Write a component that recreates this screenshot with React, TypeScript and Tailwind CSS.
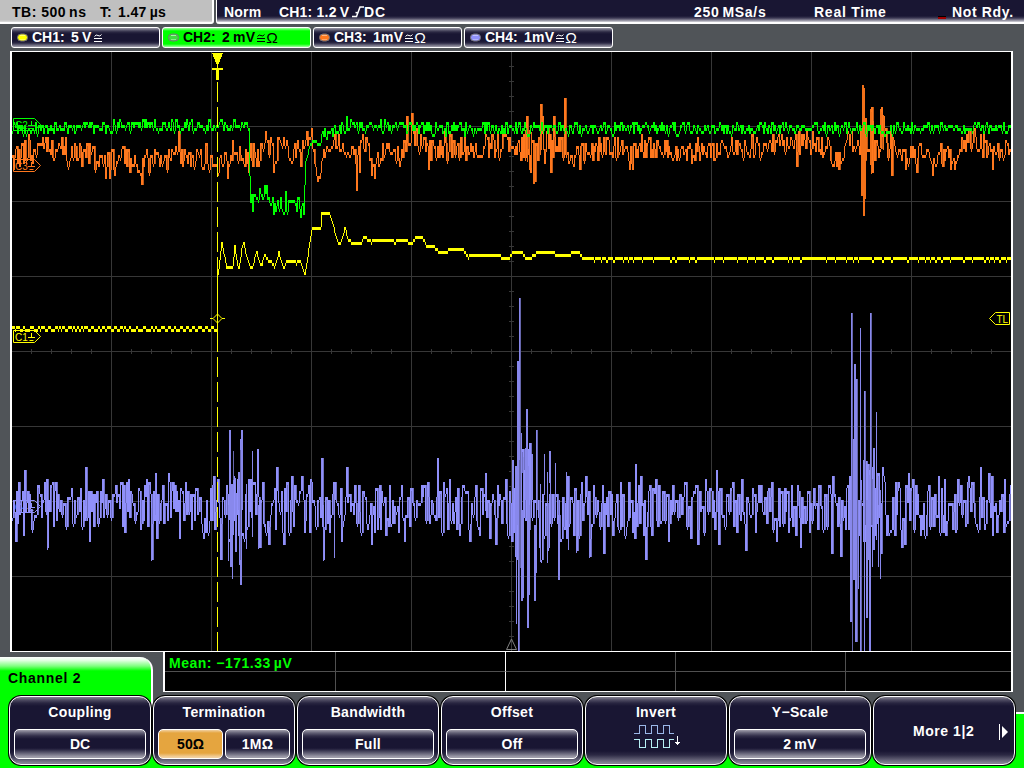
import type { ReactNode } from 'react';

type Point = [number, number];
type Bar = [number, number, number];

const X0 = 12;
const X1 = 1011;
const STEP = 3;

function randomSource(seed: number) {
  let s = seed;
  return () => {
    s = (s + 0x6d2b79f5) | 0;
    let t = Math.imul(s ^ (s >>> 15), 1 | s);
    t = (t + Math.imul(t ^ (t >>> 7), 61 | t)) ^ t;
    return ((t ^ (t >>> 14)) >>> 0) / 4294967296;
  };
}

function interpolate(points: Point[], x: number) {
  if (x <= points[0][0]) return points[0][1];
  for (let i = 1; i < points.length; i++) {
    const [ax, ay] = points[i - 1];
    const [bx, by] = points[i];
    if (x <= bx) return ay + ((by - ay) * (x - ax)) / (bx - ax || 1);
  }
  return points[points.length - 1][1];
}

function columns(values: number[], wideFrom = 1000) {
  let bright = '';
  let dim = '';
  for (let i = 0; i < values.length; i++) {
    const q = Math.round(values[i] / STEP) * STEP;
    const p = i ? Math.round(values[i - 1] / STEP) * STEP : q;
    const top = Math.min(p, q) - 1;
    const h = Math.max(STEP, Math.abs(p - q));
    bright += `M${X0 + i + 0.5} ${top}v${h}`;
    if (h > wideFrom && i % 3 && i < values.length - 1) dim += `M${X0 + i + 1.5} ${top}v${h}`;
  }
  return { bright, dim };
}

function bars(list: Bar[]) {
  return list.map(([x, a, b]) => `M${x + 0.5} ${a}V${b}`).join('');
}

function noisy(base: Point[], amp: Point[], seed: number, hold: number, flip: number, peaks: Point[] = []) {
  const r = randomSource(seed);
  const out: number[] = [];
  let n = 0;
  let sign = 1;
  let left = 0;
  for (let x = X0; x < X1; x++) {
    if (left <= 0) {
      if (r() < flip) sign = -sign;
      n = sign * (0.12 + 0.88 * Math.pow(r(), 1.35));
      left = r() < hold ? 2 : 1;
    }
    left--;
    out.push(interpolate(base, x) + n * interpolate(amp, x));
  }
  peaks.forEach(([x, y]) => {
    out[x - X0] = y;
  });
  return out;
}

const greenBase: Point[] = [
  [12, 129], [80, 129], [150, 126], [247, 127], [248, 130], [249, 178], [250, 202], [256, 199], [262, 197], [266, 196],
  [270, 203], [285, 205], [303, 209], [304, 186], [305, 161], [307, 156], [309, 148], [312, 142], [318, 141],
  [322, 135], [334, 132], [340, 128], [370, 127], [440, 130], [470, 130], [560, 129], [1011, 129],
];
const greenAmp: Point[] = [[12, 6.5], [247, 6.5], [249, 3], [251, 10], [303, 10], [304, 0], [312, 3], [322, 7], [1011, 6.5]];
const greenPeaks: Point[] = [[154, 119], [252, 214], [264, 187], [273, 216], [285, 193], [300, 219], [303, 216], [346, 118]];

const orangeBase: Point[] = [
  [12, 159], [30, 152], [60, 153], [90, 158], [140, 162], [200, 158], [225, 161], [250, 156], [280, 152],
  [300, 154], [310, 135], [313, 155], [317, 175], [321, 165], [326, 143], [334, 142], [355, 156],
  [362, 142], [376, 162], [388, 146], [400, 154], [412, 136], [430, 153], [450, 148], [470, 150], [500, 148],
  [520, 149], [545, 147], [580, 152], [600, 148], [620, 149], [630, 160], [640, 147], [680, 152], [730, 150],
  [790, 144], [810, 144], [825, 151], [838, 159], [849, 138], [857, 153], [870, 142], [890, 147], [905, 155],
  [925, 154], [955, 155], [972, 139], [990, 152], [1011, 145],
];
const orangeAmp: Point[] = [[12, 14], [250, 14], [300, 15], [310, 8], [330, 10], [500, 14], [525, 20], [560, 18], [580, 13], [720, 13], [855, 13], [860, 24], [885, 20], [900, 13], [1011, 13]];
const orangePeaks: Point[] = [
  [24, 142], [28, 136], [47, 138], [61, 139], [65, 139], [105, 180], [109, 180], [114, 178], [129, 174], [141, 187],
  [178, 133], [217, 176], [227, 180], [232, 142], [248, 174], [265, 133], [270, 138], [273, 174], [311, 130],
  [317, 183], [319, 180], [356, 193], [359, 174], [371, 178], [374, 181], [378, 169], [399, 169], [406, 118],
  [411, 115], [428, 172], [444, 128], [465, 163], [526, 118], [530, 173], [534, 184], [540, 106], [542, 118],
  [550, 175], [553, 118], [564, 100], [573, 169], [579, 172], [629, 172], [632, 170], [796, 168], [838, 172],
  [871, 109], [872, 175], [881, 109], [883, 116], [891, 177], [905, 171], [916, 175], [932, 177], [950, 171],
  [954, 172], [968, 130], [973, 130], [992, 171],
];
const orangeBars: Bar[] = [
  [861, 130, 196], [862, 85, 196], [863, 85, 216], [864, 88, 216], [865, 118, 199], [866, 118, 160], [870, 109, 165],
  [871, 112, 174], [873, 121, 162], [880, 109, 148], [881, 112, 146], [883, 115, 150], [540, 106, 155], [541, 118, 150],
  [527, 126, 162], [529, 130, 170], [533, 143, 184], [534, 143, 184], [543, 120, 150], [531, 132, 168], [525, 130, 160],
];

const yellowShape: Point[] = [
  [12, 329], [216, 329], [217, 277], [219, 262], [221, 244], [223, 254], [226, 270], [228, 266], [232, 266], [234, 247],
  [236, 262], [238, 270], [241, 250], [243, 242], [245, 255], [249, 267], [252, 267], [256, 251], [258, 262],
  [261, 266], [264, 254], [267, 262], [270, 262], [274, 267], [278, 253], [280, 262], [283, 270], [286, 260],
  [293, 260], [296, 264], [298, 260], [301, 266], [304, 276], [307, 258], [309, 242], [311, 230], [313, 227],
  [320, 227], [321, 214], [323, 212], [328, 212], [332, 224], [335, 237], [337, 243], [340, 243], [344, 229],
  [347, 239], [350, 242], [357, 242], [359, 245], [361, 242], [364, 236], [366, 239], [370, 242], [375, 240],
  [392, 240], [394, 243], [397, 240], [405, 240], [408, 243], [412, 242], [416, 237], [420, 236], [423, 240],
  [425, 245], [431, 245], [434, 248], [438, 252], [445, 252], [448, 250], [451, 249], [461, 249], [464, 252],
  [467, 257], [472, 255], [497, 255], [501, 257], [509, 257], [512, 252], [521, 252], [524, 257], [531, 257],
  [537, 252], [551, 252], [556, 255], [568, 255], [572, 252], [577, 252], [581, 257], [600, 258], [1011, 258],
];

function yellowValues() {
  const r = randomSource(77);
  const out: number[] = [];
  let off = 0;
  let left = 0;
  for (let x = X0; x < X1; x++) {
    if (left <= 0) {
      if (off) {
        off = 0;
        left = 2 + Math.floor(r() * (x < 216 ? 5 : 7));
      } else {
        off = x < 216 ? -3 : 3;
        left = 1 + Math.floor(r() * 3);
      }
    }
    left--;
    out.push(interpolate(yellowShape, x) + (x < 216 || x > 590 ? off : 0));
  }
  return out;
}

const violetBase: Point[] = [[12, 508], [160, 507], [230, 509], [560, 510], [1011, 510]];
const violetAmp: Point[] = [
  [12, 26], [225, 27], [232, 48], [250, 36], [262, 27], [500, 27], [512, 38], [520, 75], [535, 60], [560, 40],
  [590, 31], [660, 26], [845, 27], [850, 50], [878, 50], [886, 30], [1011, 28],
];
const violetPeaks: Point[] = [
  [15, 543], [18, 484], [24, 472], [23, 538], [46, 481], [47, 550], [55, 484], [85, 469], [89, 544], [102, 481],
  [126, 484], [146, 481], [151, 561], [155, 475], [156, 541], [168, 474], [179, 541], [185, 484], [203, 541],
  [213, 478], [217, 481], [220, 561], [257, 451], [259, 549], [268, 547], [276, 469], [283, 547], [291, 478],
  [301, 478], [304, 535], [310, 481], [321, 460], [323, 561], [334, 558], [334, 484], [341, 543], [346, 469],
  [371, 545], [379, 486], [404, 543], [437, 460], [449, 481], [459, 537], [469, 543], [475, 487], [485, 475],
  [489, 541], [495, 547], [499, 496], [576, 553], [585, 478], [589, 558], [593, 485], [603, 556], [612, 538],
  [628, 482], [634, 541], [635, 466], [640, 478], [645, 561], [649, 487], [655, 481], [668, 543], [672, 486],
  [690, 541], [697, 547], [705, 481], [716, 470], [718, 545], [741, 481], [745, 553], [760, 486], [776, 543],
  [797, 487], [800, 549], [831, 556], [832, 478], [840, 559], [849, 478], [882, 469], [884, 482], [886, 538],
  [894, 538], [898, 482], [901, 550], [904, 547], [908, 475], [912, 481], [920, 538], [938, 478], [943, 535],
  [944, 481], [957, 481], [968, 478], [980, 469], [988, 475], [991, 478], [992, 538], [1004, 481], [1003, 535],
];
const violetBars: Bar[] = [
  [46, 481, 515], [47, 515, 550], [85, 469, 506], [151, 508, 561], [155, 475, 515], [228, 505, 561], [229, 430, 520],
  [230, 430, 567], [231, 484, 567], [232, 484, 579], [233, 451, 535], [235, 478, 552], [236, 493, 552],
  [238, 472, 510], [239, 472, 565], [240, 439, 585], [241, 430, 585], [242, 430, 510], [246, 484, 549],
  [252, 451, 537], [258, 505, 549], [321, 460, 510], [323, 505, 561], [334, 484, 558], [485, 475, 511],
  [512, 460, 537], [513, 460, 500], [515, 466, 550], [516, 466, 624], [517, 361, 525], [518, 361, 651],
  [519, 298, 651], [520, 433, 568], [521, 433, 601], [522, 510, 601], [523, 457, 598], [525, 448, 500],
  [526, 409, 500], [527, 409, 628], [528, 466, 628], [529, 505, 595], [531, 454, 500], [532, 454, 500],
  [534, 525, 601], [535, 525, 601], [536, 430, 573], [537, 430, 510], [540, 484, 562], [544, 454, 495],
  [547, 472, 563], [549, 451, 483], [550, 451, 510], [555, 463, 510], [558, 520, 580], [559, 500, 580],
  [566, 472, 520], [568, 500, 550], [576, 490, 553], [589, 500, 558],
  [850, 500, 622], [851, 313, 622], [852, 313, 651], [853, 439, 580], [854, 364, 580], [855, 364, 642],
  [856, 379, 642], [858, 500, 589], [860, 328, 651], [861, 480, 651], [863, 460, 510], [864, 391, 651],
  [865, 391, 510], [866, 500, 618], [867, 500, 618], [868, 466, 560], [869, 475, 651], [870, 313, 651],
  [872, 525, 567], [873, 448, 550], [874, 448, 550], [876, 412, 540], [878, 505, 567], [880, 490, 579],
];
const violetShade: Bar[] = [
  [852, 313, 651], [857, 379, 642], [861, 500, 651], [865, 391, 525], [871, 313, 525], [520, 298, 568],
  [519, 460, 651], [537, 430, 510], [233, 451, 480], [240, 450, 560],
];

const green = columns(noisy(greenBase, greenAmp, 41, 0.25, 0.62, greenPeaks));
const orange = columns(noisy(orangeBase, orangeAmp, 1207, 0.2, 0.55, orangePeaks), 12);
const yellow = columns(yellowValues());
const violet = columns(noisy(violetBase, violetAmp, 9931, 0.35, 0.68, violetPeaks), 14);

const gridX = [111, 211, 311, 411, 511, 611, 711, 811, 911];
const gridY = [126, 201, 276, 351, 426, 501, 576];

function buildGrid() {
  let d = '';
  gridX.forEach((x) => (d += `M${x + 0.5} 52V651`));
  gridY.forEach((y) => (d += `M12 ${y + 0.5}H1011`));
  for (let x = 31; x < 1010; x += 20) if ((x - 11) % 100) d += `M${x + 0.5} 349V354`;
  for (let y = 66; y < 650; y += 15) if ((y - 51) % 75) d += `M509 ${y + 0.5}H514`;
  return d;
}
const gridPath = buildGrid();

function ChannelTag({ y, color, label }: { y: number; color: string; label: string }) {
  return (
    <g stroke={color} fill="none">
      <path d={`M13.5 ${y - 5.5}H34.5L40.5 ${y + 0.5}L34.5 ${y + 6.5}H13.5Z`} />
      <path d={`M31.5 ${y - 3}V${y + 1}M28 ${y + 1.5}H35M29.5 ${y + 4.5}H33.5`} />
      <text x="15" y={y + 4.5} fill={color} stroke="none" fontSize="10" fontFamily="Liberation Sans, sans-serif">
        {label}
      </text>
    </g>
  );
}

function Plot() {
  return (
    <svg className="block h-[599px] w-[999px]" viewBox="12 52 999 599" fill="none">
      <g shapeRendering="crispEdges">
        <path d={gridPath} stroke="#373737" />
        <path d={violet.dim} stroke="#6f6fc2" />
        <path d={violet.bright} stroke="#9090fa" />
        <path d={bars(violetBars)} stroke="#8888ec" />
        <path d={bars(violetShade)} stroke="#6666ac" />
        <path d={orange.dim} stroke="#bf5a17" />
        <path d={orange.bright} stroke="#ff781e" />
        <path d={bars(orangeBars)} stroke="#f27119" />
        <path d={green.bright} stroke="#00ff00" />
        <path d={yellow.bright} stroke="#ffff00" />
        <path d="M217.5 277V332" stroke="#ffff00" />
        <path d="M217.5 82V651" stroke="#ffff00" strokeDasharray="20 5" />
        <path d="M212 53H223L219 63V64H216V63ZM217 63H218V68H223V70H219V80H216V70H212V68H217Z" fill="#ffff00" />
      </g>
      <path d="M210 318.5H213L217.5 314L222 318.5H225M213 318.5L217.5 323L222 318.5" stroke="#ffff00" />
      <ChannelTag y={124} color="#00ff00" label="C2" />
      <ChannelTag y={165} color="#ff781e" label="C3" />
      <ChannelTag y={336} color="#ffff00" label="C1" />
      <ChannelTag y={506} color="#9090fa" label="C4" />
      <path d="M1009.500 312.500V324.500H995.500L989.500 318.500L995.500 312.500Z" fill="#000" stroke="#ffff00" />
      <text x="996.500" y="322.500" fill="#ffff00" fontSize="10" fontFamily="Liberation Sans, sans-serif">TL</text>
      <path d="M511.500 639L516.500 649.500H506.500Z" stroke="#808080" />
    </svg>
  );
}

function Led({ from, to }: { from: string; to: string }) {
  return (
    <svg className="h-[9px] w-[11px] shrink-0" viewBox="0 0 11 9">
      <rect x="0.500" y="1" width="10" height="7" rx="3.500" fill={from} stroke="#77747a" />
      <path d="M3 2.500H8" stroke={to} strokeOpacity="0.7" />
      <path d="M3 6.500H8" stroke={to} strokeOpacity="0.5" />
    </svg>
  );
}

function CongruentSign() {
  return (
    <svg className="ml-[2px] h-[10px] w-[8px] shrink-0" viewBox="0 0 8 10" fill="none" stroke="currentColor">
      <path d="M0.500 3.500Q2 1 4 2.500T7.500 1.500M0 5.500H8M0 8.500H8" />
    </svg>
  );
}

const darkPill =
  'border-white text-white bg-[linear-gradient(to_bottom,#9c9aa8_0px,#5c5a70_2px,#2b2843_4px,#191633_6px,#191633_13px,#2b2843_15px,#68667a_17px,#a3a1ae_19px)]';
const greenPill =
  'border-white text-black bg-[linear-gradient(to_bottom,#a0ffa0_0px,#00ff00_3px,#00ff00_16px,#a0ffa0_19px)]';

function Pill({ name, value, ohm, led, glow, active }: { name: string; value: ReactNode; ohm?: boolean; led: string; glow: string; active?: boolean }) {
  return (
    <div className={`flex h-[21px] w-[149px] items-center rounded-[3px] border pl-[5px] text-[14px] font-bold ${active ? greenPill : darkPill}`}>
      <Led from={led} to={glow} />
      <span className="ml-[4px] w-[36px] whitespace-nowrap leading-[19px]">{name}:</span>
      <span className="ml-[3px] whitespace-nowrap leading-[19px] tracking-[0.2px]">{value}</span>
      <CongruentSign />
      {ohm && <span className="ml-[1px] text-[15.5px] font-normal leading-[19px]">Ω</span>}
    </div>
  );
}

function Thin() {
  return <span className="inline-block w-[3px]" />;
}

function Value({ children, className = '' }: { children: ReactNode; className?: string }) {
  return (
    <div
      className={`flex h-[30px] items-center justify-center rounded-[5px] border-[1.5px] border-white bg-[linear-gradient(to_bottom,#a19fac_0px,#605e73_3px,#302d48_6px,#191633_9px,#191633_18px,#302d48_20px,#605e73_23px,#a19fac_27px)] text-[14px] font-bold text-white ${className}`}
    >
      {children}
    </div>
  );
}

function SoftKey({ title, children }: { title?: string; children: ReactNode }) {
  return (
    <div className="h-[71px] w-[144px] rounded-[13px] bg-black p-px">
      <div className="flex h-[69px] w-[142px] flex-col rounded-[12px] border-[1.5px] border-white bg-[linear-gradient(to_bottom,#858393_0px,#4e4b62_3px,#292641_6px,#191633_9px,#191633_54px,#2c2944_58px,#646277_63px,#858393_66px)] px-[4px] text-white">
        {title && <div className="mt-[7px] h-[16px] text-center text-[14px] font-bold leading-[16px] tracking-[0.35px]">{title}</div>}
        {children}
      </div>
    </div>
  );
}

export default function App() {
  return (
    <div className="flex h-[768px] w-[1024px] flex-col overflow-hidden bg-[#505458] font-['Liberation_Sans',Arial,sans-serif]">
      <header className="flex h-[24px] gap-[2px] text-[14px] font-bold leading-[24px]">
        <div className="flex h-[24px] w-[214px] whitespace-nowrap rounded-br-[3px] border-r-2 border-white bg-[linear-gradient(to_bottom,#c0c0c0_20px,#e0e0e0_22px,#fff_22px)] pl-[12px] text-black">
          <span className="w-[88px] tracking-[0.5px]">TB: 500<Thin />ns</span>
          <span className="w-[18px]">T:</span>
          <span className="tracking-[0.35px]">1.47<Thin />µs</span>
        </div>
        <div className="flex h-[24px] flex-1 whitespace-nowrap rounded-bl-[3px] border-l border-white bg-[linear-gradient(to_bottom,#191633_16px,#3b3853_18px,#817f90_20px,#d8d7dd_22px,#fff_22px)] pl-[7px] text-white">
          <span className="w-[55px] tracking-[0.2px]">Norm</span>
          <span className="w-[73px] tracking-[0.2px]">CH1: 1.2<Thin />V</span>
          <svg className="mt-[6px] h-[12px] w-[12px]" viewBox="0 0 12 12" fill="none" stroke="#fff" strokeWidth="1.500">
            <path d="M0 10.500H4.500L8 1H12M3.500 6.500L6.500 7" />
          </svg>
          <span className="w-[330px] tracking-[0.8px]">DC</span>
          <span className="w-[120px] tracking-[0.7px]">250<Thin />MSa/s</span>
          <span className="w-[124px] tracking-[0.75px]">Real Time</span>
          <span className="mt-[16px] h-[3px] w-[8px] border-b-2 border-[#a00000] bg-black" />
          <span className="ml-[6px] tracking-[0.65px]">Not Rdy.</span>
        </div>
      </header>

      <div className="flex h-[27px] gap-[2px] pl-[11px] pt-[3px]">
        <Pill name="CH1" value={<>5<Thin />V</>} led="#ffff00" glow="#ffffb0" />
        <Pill name="CH2" value={<>2<Thin />mV</>} ohm led="#40dc40" glow="#d0ffd0" active />
        <Pill name="CH3" value="1mV" ohm led="#ff781e" glow="#ffd0a8" />
        <Pill name="CH4" value="1mV" ohm led="#9090fa" glow="#d4d4ff" />
      </div>

      <div className="ml-[10px] h-[601px] w-[1003px] border-x-2 border-y border-white bg-black">
        <Plot />
      </div>

      <div className="flex h-[43px] items-start">
        <div className="mt-[5px] h-[38px] w-[153px] rounded-tr-[13px] border-r-2 border-white bg-[linear-gradient(to_bottom,#fff_0px,#e8ffe8_3px,#80ff80_9px,#00ff00_14px)] pl-[8px] pt-[13px] text-[14px] font-bold leading-[16px] tracking-[0.7px] text-black">
          Channel 2
        </div>
        <div className="ml-[10px] grid h-[40px] w-[850px] grid-cols-[171px_170px_170px_170px_1fr] grid-rows-[20px_19px] border-b border-l-2 border-r-2 border-white bg-black">
          <div className="whitespace-nowrap border-b border-r border-[#505050] pl-[4px] text-[14px] font-bold leading-[22px] tracking-[0.5px] text-[#00ff00]">
            Mean: −171.33<Thin />µV
          </div>
          <div className="border-b border-r border-b-[#505050] border-r-white" />
          <div className="border-b border-r border-[#505050]" />
          <div className="border-b border-r border-[#505050]" />
          <div className="border-b border-[#505050]" />
          <div className="border-r border-[#505050]" />
          <div className="border-r border-white" />
          <div className="border-r border-[#505050]" />
          <div className="border-r border-[#505050]" />
          <div />
        </div>
      </div>

      <div className="flex h-[73px] bg-[linear-gradient(to_right,#00ff00_151px,#fff_151px,#fff_153px,transparent_153px),linear-gradient(to_bottom,#505458_17px,#fff_17px,#fff_19px,#00ff00_19px)] bg-no-repeat pl-[8px] [background-size:153px_25px,100%_100%]">
        <SoftKey title="Coupling">
          <Value className="mt-[9px]">DC</Value>
        </SoftKey>
        <SoftKey title="Termination">
          <div className="mt-[9px] flex justify-between">
            <div className="flex h-[30px] w-[65px] items-center justify-center rounded-[5px] border-[1.5px] border-white bg-[linear-gradient(to_bottom,#f1d0a0_0px,#e5a53f_3px,#e5a53f_23px,#f1d0a0_27px)] text-[14px] font-bold text-black">50Ω</div>
            <Value className="w-[65px] tracking-[0.3px]">1MΩ</Value>
          </div>
        </SoftKey>
        <SoftKey title="Bandwidth">
          <Value className="mt-[9px] tracking-[0.3px]">Full</Value>
        </SoftKey>
        <SoftKey title="Offset">
          <Value className="mt-[9px] tracking-[0.3px]">Off</Value>
        </SoftKey>
        <SoftKey title="Invert">
          <svg className="ml-[44px] mt-[4px] h-[26px] w-[48px]" viewBox="0 0 48 26" fill="none" shapeRendering="crispEdges">
            <path d="M0 9.500H5.500V1.500H11.500V9.500H17.500V1.500H23.500V9.500H29.500V1.500H35.500V9.500H40" stroke="#9bb7e8" />
            <path d="M0 15.500H5.500V23.500H11.500V15.500H17.500V23.500H23.500V15.500H29.500V23.500H35.500V15.500H40" stroke="#b8f0f5" />
            <path d="M43.500 12V21M41 18.500H46M42 19.500H45" stroke="#fff" />
          </svg>
        </SoftKey>
        <SoftKey title="Y−Scale">
          <Value className="mt-[9px] tracking-[0.3px]">2<Thin />mV</Value>
        </SoftKey>
        <SoftKey>
          <div className="flex h-full items-center pl-[35px] pt-[2px] text-[14px] font-bold">
            <span className="w-[86px] whitespace-nowrap tracking-[0.55px]">More 1|2</span>
            <svg className="h-[16px] w-[10px] shrink-0" viewBox="0 0 10 16">
              <path d="M0.500 0V16" stroke="#fff" />
              <path d="M3 2L9 8L3 14Z" fill="#fff" />
            </svg>
          </div>
        </SoftKey>
      </div>
    </div>
  );
}
